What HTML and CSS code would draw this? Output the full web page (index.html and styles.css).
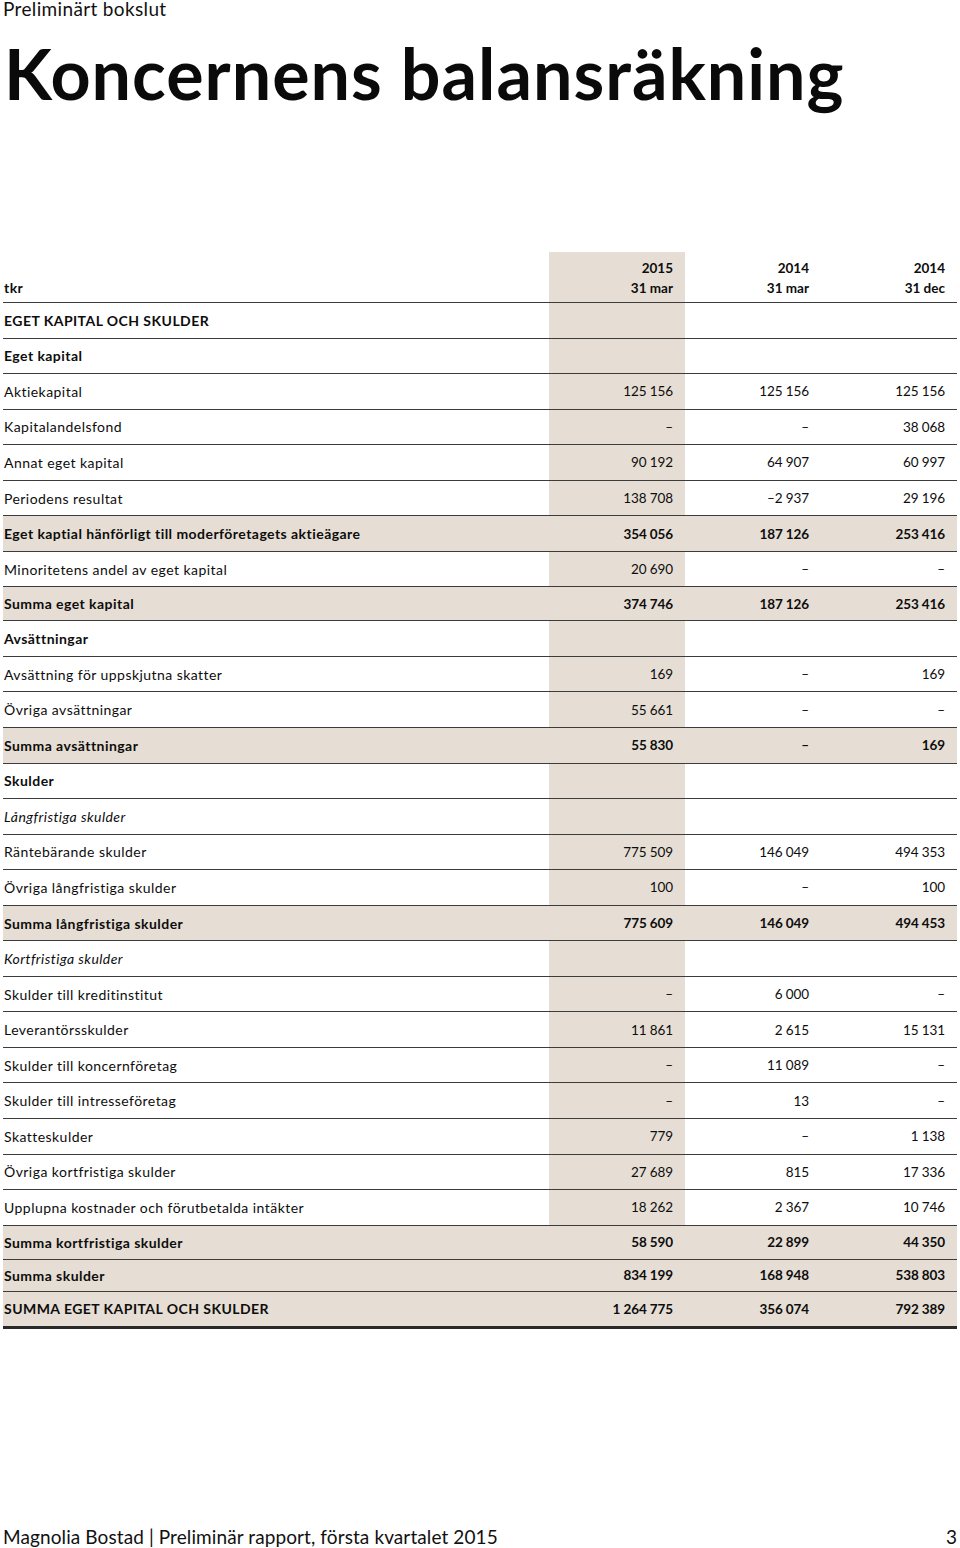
FILE: index.html
```html
<!DOCTYPE html>
<html lang="sv">
<head>
<meta charset="utf-8">
<title>Koncernens balansräkning</title>
<link rel="stylesheet" href="styles.css">
</head>
<body>
<div class="page">
  <header class="top">
    <div class="kicker">Preliminärt bokslut</div>
    <h1 class="title">Koncernens balansräkning</h1>
  </header>

  <div class="table">
    <div class="row head">
      <div class="lbl">tkr</div>
      <div class="val cur"><span>2015</span><span>31 mar</span></div>
      <div class="val"><span>2014</span><span>31 mar</span></div>
      <div class="val"><span>2014</span><span>31 dec</span></div>
    </div>
    <div class="row bold"><div class="lbl">EGET KAPITAL OCH SKULDER</div><div class="val cur"></div><div class="val"></div><div class="val"></div></div>
    <div class="row bold"><div class="lbl">Eget kapital</div><div class="val cur"></div><div class="val"></div><div class="val"></div></div>
    <div class="row"><div class="lbl">Aktiekapital</div><div class="val cur">125 156</div><div class="val">125 156</div><div class="val">125 156</div></div>
    <div class="row"><div class="lbl">Kapitalandelsfond</div><div class="val cur">–</div><div class="val">–</div><div class="val">38 068</div></div>
    <div class="row"><div class="lbl">Annat eget kapital</div><div class="val cur">90 192</div><div class="val">64 907</div><div class="val">60 997</div></div>
    <div class="row"><div class="lbl">Periodens resultat</div><div class="val cur">138 708</div><div class="val">–2 937</div><div class="val">29 196</div></div>
    <div class="row bold sum"><div class="lbl">Eget kaptial hänförligt till moderföretagets aktieägare</div><div class="val cur">354 056</div><div class="val">187 126</div><div class="val">253 416</div></div>
    <div class="row"><div class="lbl">Minoritetens andel av eget kapital</div><div class="val cur">20 690</div><div class="val">–</div><div class="val">–</div></div>
    <div class="row bold sum short"><div class="lbl">Summa eget kapital</div><div class="val cur">374 746</div><div class="val">187 126</div><div class="val">253 416</div></div>
    <div class="row bold"><div class="lbl">Avsättningar</div><div class="val cur"></div><div class="val"></div><div class="val"></div></div>
    <div class="row"><div class="lbl">Avsättning för uppskjutna skatter</div><div class="val cur">169</div><div class="val">–</div><div class="val">169</div></div>
    <div class="row"><div class="lbl">Övriga avsättningar</div><div class="val cur">55 661</div><div class="val">–</div><div class="val">–</div></div>
    <div class="row bold sum"><div class="lbl">Summa avsättningar</div><div class="val cur">55 830</div><div class="val">–</div><div class="val">169</div></div>
    <div class="row bold"><div class="lbl">Skulder</div><div class="val cur"></div><div class="val"></div><div class="val"></div></div>
    <div class="row ital"><div class="lbl">Långfristiga skulder</div><div class="val cur"></div><div class="val"></div><div class="val"></div></div>
    <div class="row"><div class="lbl">Räntebärande skulder</div><div class="val cur">775 509</div><div class="val">146 049</div><div class="val">494 353</div></div>
    <div class="row"><div class="lbl">Övriga långfristiga skulder</div><div class="val cur">100</div><div class="val">–</div><div class="val">100</div></div>
    <div class="row bold sum"><div class="lbl">Summa långfristiga skulder</div><div class="val cur">775 609</div><div class="val">146 049</div><div class="val">494 453</div></div>
    <div class="row ital"><div class="lbl">Kortfristiga skulder</div><div class="val cur"></div><div class="val"></div><div class="val"></div></div>
    <div class="row"><div class="lbl">Skulder till kreditinstitut</div><div class="val cur">–</div><div class="val">6 000</div><div class="val">–</div></div>
    <div class="row"><div class="lbl">Leverantörsskulder</div><div class="val cur">11 861</div><div class="val">2 615</div><div class="val">15 131</div></div>
    <div class="row"><div class="lbl">Skulder till koncernföretag</div><div class="val cur">–</div><div class="val">11 089</div><div class="val">–</div></div>
    <div class="row"><div class="lbl">Skulder till intresseföretag</div><div class="val cur">–</div><div class="val">13</div><div class="val">–</div></div>
    <div class="row"><div class="lbl">Skatteskulder</div><div class="val cur">779</div><div class="val">–</div><div class="val">1 138</div></div>
    <div class="row"><div class="lbl">Övriga kortfristiga skulder</div><div class="val cur">27 689</div><div class="val">815</div><div class="val">17 336</div></div>
    <div class="row"><div class="lbl">Upplupna kostnader och förutbetalda intäkter</div><div class="val cur">18 262</div><div class="val">2 367</div><div class="val">10 746</div></div>
    <div class="row bold sum s34"><div class="lbl">Summa kortfristiga skulder</div><div class="val cur">58 590</div><div class="val">22 899</div><div class="val">44 350</div></div>
    <div class="row bold sum s32"><div class="lbl">Summa skulder</div><div class="val cur">834 199</div><div class="val">168 948</div><div class="val">538 803</div></div>
    <div class="row bold sum total"><div class="lbl">SUMMA EGET KAPITAL OCH SKULDER</div><div class="val cur">1 264 775</div><div class="val">356 074</div><div class="val">792 389</div></div>
  </div>

  <footer class="foot">
    <span>Magnolia Bostad | Preliminär rapport, första kvartalet 2015</span>
    <span>3</span>
  </footer>
</div>
</body>
</html>
```

FILE: styles.css
```css
html, body {
  margin: 0;
  padding: 0;
  background: #ffffff;
}
body {
  font-family: "Lato", "Noto Sans", sans-serif;
  color: #0d0d0d;
}
.page {
  width: 960px;
  height: 1548px;
  box-sizing: border-box;
  padding: 0 3px 0 3px;
  display: flex;
  flex-direction: column;
}
.top {
  height: 252px;
}
.kicker {
  font-size: 19px;
  line-height: 18px;
  letter-spacing: 0.35px;
  color: #111;
}
.title {
  margin: 20px 0 0 1px;
  font-size: 70px;
  line-height: 70px;
  font-weight: 700;
  letter-spacing: 1px;
  color: #0a0a0a;
}
.table {
  width: 954px;
  display: flex;
  flex-direction: column;
}
.row {
  display: grid;
  grid-template-columns: 546px 136px 136px 136px;
  height: 35.55px;
  box-sizing: border-box;
  border-bottom: 1.5px solid #3c3c3c;
  align-items: stretch;
}
.row > div {
  display: flex;
  align-items: center;
}
.lbl {
  padding-left: 1px;
  white-space: nowrap;
  font-size: 14px;
  letter-spacing: 0.45px;
}
.val {
  justify-content: flex-end;
  padding-right: 12px;
  white-space: nowrap;
  font-size: 13.5px;
  letter-spacing: -0.1px;
}
.val.cur {
  background: #e6ded4;
}
.head {
  height: 51px;
}
.head > div {
  align-items: flex-end;
  padding-bottom: 4px;
  font-weight: 700;
}
.head .lbl {
  padding-bottom: 6px;
}
.head .val {
  flex-direction: column;
  align-items: flex-end;
  justify-content: flex-end;
  line-height: 20px;
  letter-spacing: 0;
}
.head .val span {
  display: block;
}
.bold {
  font-weight: 700;
}
.ital .lbl {
  font-style: italic;
}
.sum {
  background: #e6ded4;
}
.short {
  height: 34px;
}
.s34 {
  height: 34px;
}
.s32 {
  height: 32px;
}
.total {
  height: 37px;
  border-bottom: 3px solid #2a2a2a;
}
.foot {
  margin-top: auto;
  height: 21px;
  display: flex;
  justify-content: space-between;
  align-items: flex-start;
  font-size: 19px;
  line-height: 19px;
  letter-spacing: 0.1px;
  color: #111;
}
```
